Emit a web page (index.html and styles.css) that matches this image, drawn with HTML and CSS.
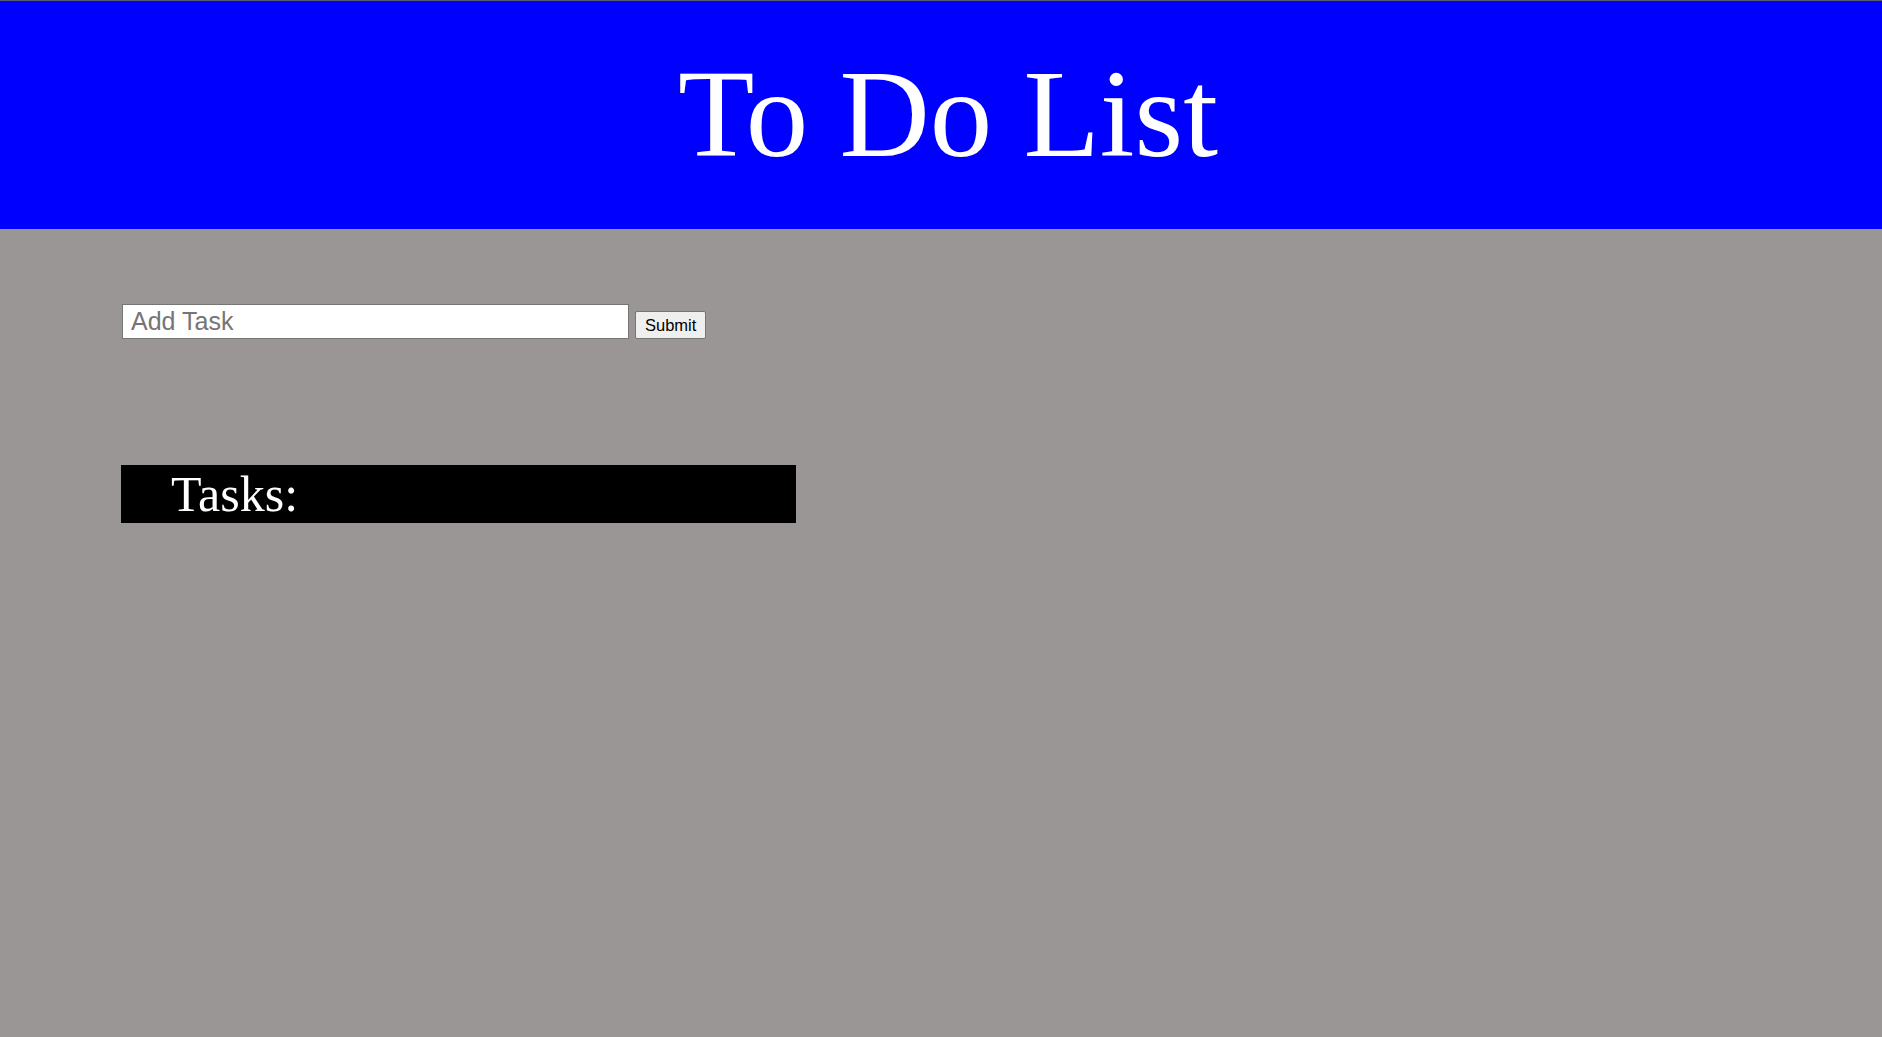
FILE: index.html
```html
<!DOCTYPE html>
<html>
<head>
<meta charset="utf-8">
<title>To Do List</title>
<link rel="stylesheet" href="styles.css">
</head>
<body>
<header class="top">
  <h1 class="title">To Do List</h1>
</header>
<main class="main">
  <form class="add-form">
    <input class="task-input" type="text" placeholder="Add Task">
    <button class="submit-btn" type="button">Submit</button>
  </form>
  <section class="tasks">
    <h2 class="tasks-head">Tasks:</h2>
  </section>
</main>
</body>
</html>
```

FILE: styles.css
```css
html, body {
  margin: 0;
  padding: 0;
  height: 100%;
}
body {
  background: #9b9696;
  font-family: "Liberation Serif", "Times New Roman", serif;
}
.top {
  background: #0000ff;
  border-top: 1px solid #5a5a6a;
  height: 228px;
  box-sizing: content-box;
  padding: 0;
}
.title {
  margin: 0;
  padding-top: 42px;
  padding-left: 14px;
  text-align: center;
  color: #ffffff;
  font-weight: normal;
  font-size: 125px;
  line-height: normal;
}
.main {
  padding: 75px 0 0 121px;
}
.add-form {
  display: flex;
  align-items: flex-end;
  gap: 6px;
  margin: 0;
}
.task-input {
  margin-left: 1px;
  width: 507px;
  height: 35px;
  box-sizing: border-box;
  border: 1px solid #767676;
  padding: 0 8px;
  font-family: "Liberation Sans", Arial, sans-serif;
  font-size: 25px;
  color: #000;
  background: #fff;
  outline: none;
}
.task-input::placeholder {
  color: #757575;
}
.submit-btn {
  height: 28px;
  box-sizing: border-box;
  padding: 0 9px;
  font-family: "Liberation Sans", Arial, sans-serif;
  font-size: 16.5px;
  color: #000;
  background: #efefef;
  border: 1px solid #767676;
  border-radius: 2px;
}
.tasks {
  margin-top: 126px;
  width: 675px;
  background: #000;
}
.tasks-head {
  margin: 0;
  height: 58px;
  padding-left: 50px;
  color: #fff;
  font-weight: normal;
  font-size: 50px;
  line-height: 58px;
}
```
